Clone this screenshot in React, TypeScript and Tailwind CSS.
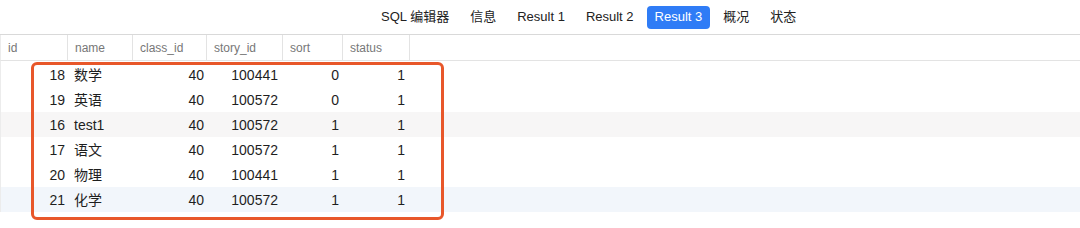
const tabs = ['SQL 编辑器', '信息', 'Result 1', 'Result 2', 'Result 3', '概况', '状态']

const cols = [
  { key: 'id', w: 'w-[67px]', align: 'text-right pr-[3px]' },
  { key: 'name', w: 'w-[65px]', align: 'text-left pl-[6px]' },
  { key: 'class_id', w: 'w-[74px]', align: 'text-right pr-[3px]' },
  { key: 'story_id', w: 'w-[76px]', align: 'text-right pr-[5px]' },
  { key: 'sort', w: 'w-[60px]', align: 'text-right pr-[4px]' },
  { key: 'status', w: 'w-[67px]', align: 'text-right pr-[5px]' },
]

const rows = [
  ['18', '数学', '40', '100441', '0', '1'],
  ['19', '英语', '40', '100572', '0', '1'],
  ['16', 'test1', '40', '100572', '1', '1'],
  ['17', '语文', '40', '100572', '1', '1'],
  ['20', '物理', '40', '100441', '1', '1'],
  ['21', '化学', '40', '100572', '1', '1'],
]

const font = { fontFamily: '"Liberation Sans", "Noto Sans CJK SC", sans-serif' }

export default function App() {
  return (
    <div className="w-[1080px] h-[228px] bg-white overflow-hidden relative" style={font}>
      {/* tab bar */}
      <div className="h-[35px] border-b border-[#d9d9d9] flex items-center pl-[373px] gap-[5px]">
        {tabs.map(t => (
          <div
            key={t}
            className={`px-[8px] h-[23px] flex items-center rounded-[4px] text-[13px] ${
              t === 'Result 3' ? 'bg-[#2f7cf6] text-white' : 'text-[#222]'
            }`}
          >
            {t}
          </div>
        ))}
      </div>

      {/* header */}
      <div className="h-[26px] flex border-b border-[#e3e3e3] border-l border-l-[#ececec]">
        {cols.map(c => (
          <div
            key={c.key}
            className={`${c.w} border-r border-[#e3e3e3] flex items-center pl-[7px] text-[12px] text-[#777]`}
          >
            {c.key}
          </div>
        ))}
      </div>

      {/* rows */}
      <div className="border-l border-[#ececec] pt-[1px]">
        {rows.map((r, i) => (
          <div
            key={i}
            className={`h-[25px] flex items-center pt-[2px] text-[14px] text-[#1e1e1e] ${
              i === 2 ? 'bg-[#f7f6f6]' : i === 5 ? 'bg-[#f2f6fb]' : ''
            }`}
          >
            {r.map((v, j) => (
              <div key={j} className={`${cols[j].w} ${cols[j].align}`}>
                {v}
              </div>
            ))}
          </div>
        ))}
      </div>

      {/* highlight box */}
      <div className="absolute left-[31px] top-[62px] w-[413px] h-[158px] border-[3px] border-[#e8572a] rounded-[6px]" />
    </div>
  )
}
